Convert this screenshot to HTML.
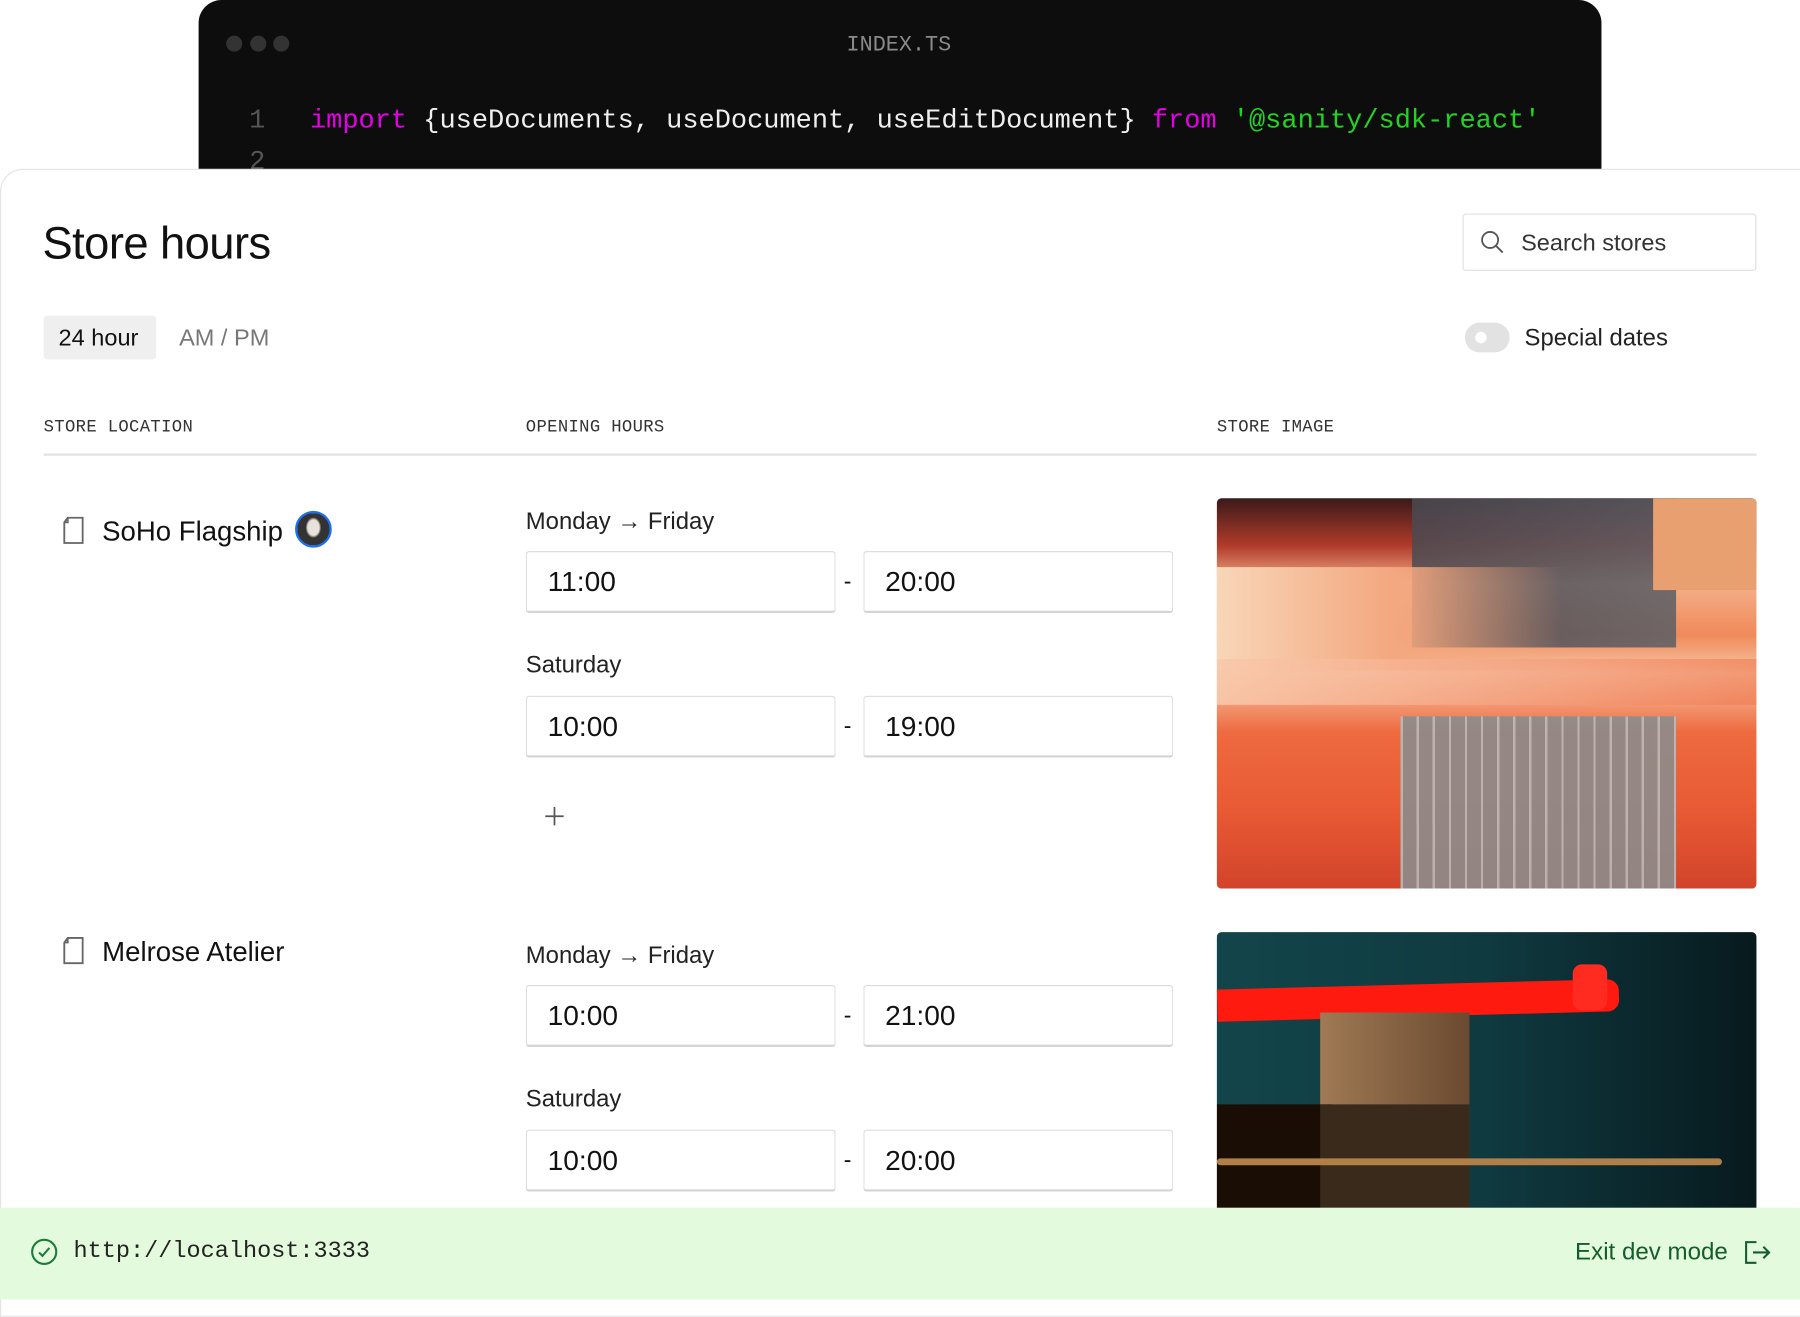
<!DOCTYPE html>
<html><head><meta charset="utf-8"><style>
html,body{margin:0;padding:0;width:1800px;height:1296px;overflow:hidden;background:#fff;}
#w{position:absolute;left:0;top:0;width:1568px;height:1129px;transform:scale(1.148);transform-origin:0 0;font-family:"Liberation Sans",sans-serif;color:#111;}
.a{position:absolute;}
.mono{font-family:"Liberation Mono",monospace;}
.inp{position:absolute;width:270px;height:54px;border:1px solid #dcdcdc;border-bottom:2px solid #d4d4d4;border-radius:3px;box-sizing:border-box;font-size:24.5px;line-height:53px;padding-left:18px;background:#fff;}
.lbl{position:absolute;font-size:20.8px;color:#222;}
.dash{position:absolute;font-size:20px;}
.hdr{position:absolute;top:364px;font-size:15px;color:#333;letter-spacing:0.3px;}
</style></head><body><div id="w">
<div class="a" style="left:173px;top:0;width:1222px;height:170px;background:#0d0d0d;border-radius:20px 20px 0 0;"></div>
<div class="a" style="left:197px;top:31px;width:14px;height:14px;border-radius:50%;background:#333"></div>
<div class="a" style="left:218px;top:31px;width:14px;height:14px;border-radius:50%;background:#333"></div>
<div class="a" style="left:238px;top:31px;width:14px;height:14px;border-radius:50%;background:#333"></div>
<div class="a mono" style="left:683px;width:200px;text-align:center;top:28px;font-size:19px;color:#8a8a8a;">INDEX.TS</div>
<div class="a mono" style="left:217px;top:92px;font-size:23.5px;color:#555;">1</div>
<div class="a mono" style="left:217px;top:128px;font-size:23.5px;color:#555;">2</div>
<div class="a mono" style="left:270px;top:92px;font-size:23.5px;color:#eee;white-space:pre;"><span style="color:#e500e5">import</span> {useDocuments, useDocument, useEditDocument} <span style="color:#e500e5">from</span> <span style="color:#21d421">'@sanity/sdk-react'</span></div>

<div class="a" style="left:0;top:147px;width:1600px;height:1000px;background:#fff;border:1px solid #e3e3e3;border-radius:20px 20px 0 0;box-sizing:border-box;"></div>
<div class="a" style="left:37px;top:190px;font-size:39.5px;color:#111;letter-spacing:-0.5px;">Store hours</div>
<div class="a" style="left:1274px;top:186px;width:256px;height:50px;border:1px solid #e0e0e0;border-radius:3px;box-sizing:border-box;"></div>
<svg class="a" style="left:1288px;top:199px" width="24" height="24" viewBox="0 0 24 24"><circle cx="10" cy="10" r="7" fill="none" stroke="#555" stroke-width="1.6"/><path d="M15 15l6 6" stroke="#555" stroke-width="1.6"/></svg>
<div class="a" style="left:1325px;top:200px;font-size:20.5px;color:#333;">Search stores</div>

<div class="a" style="left:38px;top:275px;width:98px;height:38px;background:#efefef;border-radius:3px;"></div>
<div class="a" style="left:51px;top:283px;font-size:20.5px;color:#111;">24 hour</div>
<div class="a" style="left:156px;top:283px;font-size:20.5px;color:#777;">AM / PM</div>
<div class="a" style="left:1276px;top:281px;width:39px;height:26px;background:#e2e2e2;border-radius:13px;"></div>
<div class="a" style="left:1285px;top:289px;width:10px;height:10px;background:#fff;border-radius:50%;"></div>
<div class="a" style="left:1328px;top:283px;font-size:20.8px;color:#222;">Special dates</div>

<div class="hdr mono" style="left:38px;">STORE LOCATION</div>
<div class="hdr mono" style="left:458px;">OPENING HOURS</div>
<div class="hdr mono" style="left:1060px;">STORE IMAGE</div>
<div class="a" style="left:38px;top:395px;width:1492px;height:2px;background:#e3e3e3;"></div>

<svg class="a" style="left:53px;top:449px" width="22" height="26" viewBox="0 0 22 26"><path d="M6 2h13v22H3V6z M6 2v4H3" fill="none" stroke="#666" stroke-width="1.6"/></svg>
<div class="a" style="left:89px;top:450px;font-size:24px;color:#111;">SoHo Flagship</div>
<div class="a" style="left:257px;top:445px;width:28px;height:28px;border:2px solid #1e6fe8;border-radius:50%;background:radial-gradient(ellipse 6px 8px at 50% 45%,#e8e2da 0 5px,#222 7px,#333 100%);"></div>

<div class="lbl" style="left:458px;top:443px;">Monday → Friday</div>
<div class="inp" style="left:458px;top:480px;">11:00</div><div class="dash" style="left:735px;top:496px;">-</div>
<div class="inp" style="left:752px;top:480px;">20:00</div>
<div class="lbl" style="left:458px;top:568px;">Saturday</div>
<div class="inp" style="left:458px;top:606px;">10:00</div><div class="dash" style="left:735px;top:622px;">-</div>
<div class="inp" style="left:752px;top:606px;">19:00</div>
<svg class="a" style="left:473px;top:701px" width="20" height="20" viewBox="0 0 20 20"><path d="M10 2v16M2 10h16" stroke="#555" stroke-width="1.5"/></svg>

<div class="a" style="left:1060px;top:434px;width:470px;height:340px;border-radius:4px;overflow:hidden;background:linear-gradient(180deg,#3a1a1a 0%,#b03a2a 12%,#f4b08a 22%,#f08a5a 35%,#f6c8a8 45%,#ee6a40 60%,#e85a34 80%,#d2442a 100%);">
<div class="a" style="left:170px;top:0;width:230px;height:130px;background:linear-gradient(90deg,#4a4a52,#5a5e66);opacity:.85"></div>
<div class="a" style="left:380px;top:0;width:90px;height:80px;background:#e8a070;"></div>
<div class="a" style="left:0;top:60px;width:300px;height:90px;background:linear-gradient(90deg,#f8d6b8,#f3a880,rgba(240,140,90,0));"></div>
<div class="a" style="left:160px;top:190px;width:240px;height:150px;background:repeating-linear-gradient(90deg,#bbb 0 2px,#8c8c8c 2px 14px),#999;opacity:.9;"></div>
<div class="a" style="left:0;top:140px;width:470px;height:40px;background:linear-gradient(90deg,rgba(248,200,170,.9),rgba(240,120,80,.6));"></div>
</div>

<svg class="a" style="left:53px;top:815px" width="22" height="26" viewBox="0 0 22 26"><path d="M6 2h13v22H3V6z M6 2v4H3" fill="none" stroke="#666" stroke-width="1.6"/></svg>
<div class="a" style="left:89px;top:816px;font-size:24px;color:#111;">Melrose Atelier</div>
<div class="lbl" style="left:458px;top:821px;">Monday → Friday</div>
<div class="inp" style="left:458px;top:858px;">10:00</div><div class="dash" style="left:735px;top:874px;">-</div>
<div class="inp" style="left:752px;top:858px;">21:00</div>
<div class="lbl" style="left:458px;top:946px;">Saturday</div>
<div class="inp" style="left:458px;top:984px;">10:00</div><div class="dash" style="left:735px;top:1000px;">-</div>
<div class="inp" style="left:752px;top:984px;">20:00</div>

<div class="a" style="left:1060px;top:812px;width:470px;height:260px;border-radius:4px 4px 0 0;overflow:hidden;background:linear-gradient(90deg,#12454a 0%,#0f3a40 50%,#071a1e 100%);">
<div class="a" style="left:0;top:50px;width:350px;height:28px;background:#ff1a10;transform:rotate(-1.5deg);transform-origin:0 0;border-radius:0 10px 10px 0;"></div>
<div class="a" style="left:310px;top:28px;width:30px;height:40px;background:#ff2a20;border-radius:8px;"></div>
<div class="a" style="left:90px;top:70px;width:130px;height:130px;background:linear-gradient(90deg,#a07a55,#6a4a30);"></div>
<div class="a" style="left:0;top:150px;width:100px;height:110px;background:#1a0d06;"></div>
<div class="a" style="left:90px;top:150px;width:130px;height:110px;background:#3a2a1c;"></div>
<div class="a" style="left:0;top:197px;width:440px;height:6px;background:#b08048;border-radius:3px;"></div>
</div>

<div class="a" style="left:0;top:1052px;width:1568px;height:80px;background:#e3fbdc;"></div>
<svg class="a" style="left:26px;top:1078px" width="25" height="25" viewBox="0 0 25 25"><circle cx="12.5" cy="12.5" r="10.5" fill="none" stroke="#1c7a3a" stroke-width="1.8"/><path d="M8 13l3 3 6-7" fill="none" stroke="#1c7a3a" stroke-width="1.8"/></svg>
<div class="a mono" style="left:64px;top:1079px;font-size:20.5px;color:#222;">http://localhost:3333</div>
<div class="a" style="left:1372px;top:1079px;font-size:21px;color:#155d2a;">Exit dev mode</div>
<svg class="a" style="left:1518px;top:1079px" width="26" height="24" viewBox="0 0 26 24"><path d="M12 3H3v18h9M9 12h14M18 7l5 5-5 5" fill="none" stroke="#155d2a" stroke-width="1.8"/></svg>
</div></body></html>
